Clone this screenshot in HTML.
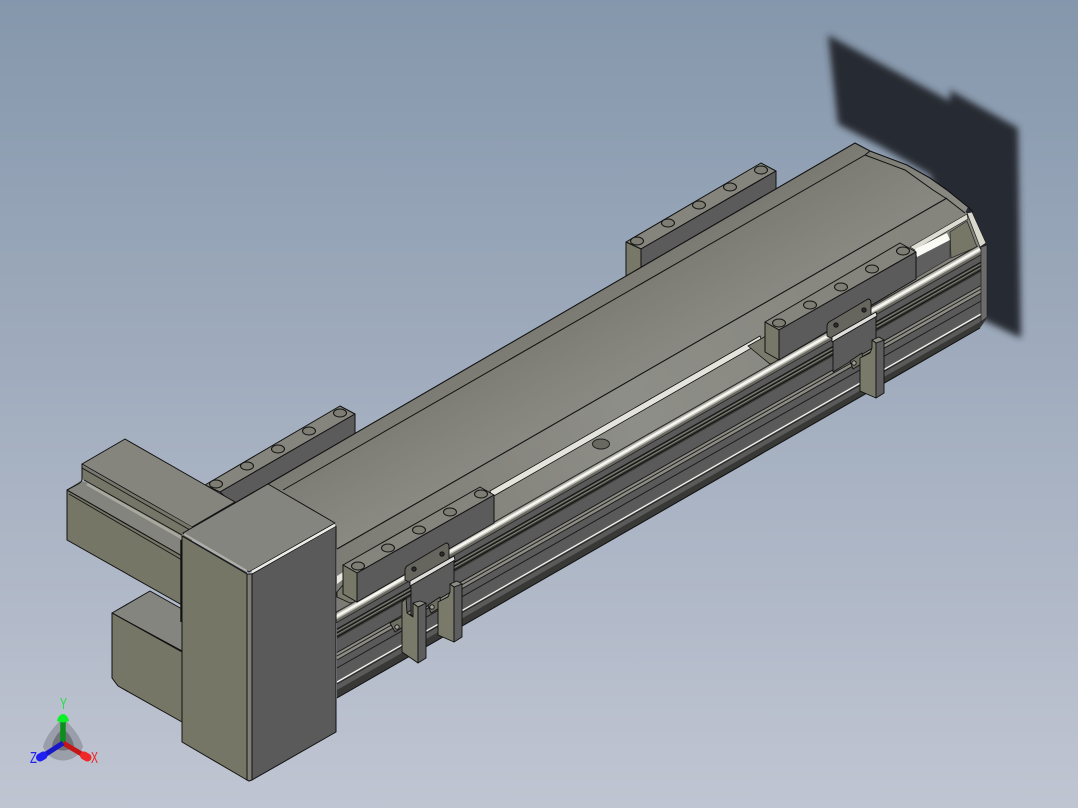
<!DOCTYPE html>
<html><head><meta charset="utf-8"><style>
html,body{margin:0;padding:0;width:1078px;height:808px;overflow:hidden;background:#a4adbd}
svg{display:block}
text{font-family:"Liberation Sans",sans-serif}
</style></head><body>
<svg width="1078" height="808" viewBox="0 0 1078 808" xmlns="http://www.w3.org/2000/svg">
<defs>
<linearGradient id="bg" x1="0" y1="0" x2="0" y2="1"><stop offset="0" stop-color="#8597ac"/><stop offset="1" stop-color="#c0c5d2"/></linearGradient>
<linearGradient id="top" gradientUnits="userSpaceOnUse" x1="660" y1="200" x2="760" y2="380"><stop offset="0" stop-color="#72726a"/><stop offset=".55" stop-color="#85857e"/><stop offset="1" stop-color="#92928c"/></linearGradient>
<linearGradient id="shelf" gradientUnits="userSpaceOnUse" x1="300" y1="500" x2="900" y2="200"><stop offset="0" stop-color="#7c7c74"/><stop offset=".5" stop-color="#8e8e88"/><stop offset="1" stop-color="#85857d"/></linearGradient>
<filter id="bl" x="-10%" y="-10%" width="120%" height="120%"><feGaussianBlur stdDeviation="3.5"/></filter>
<g id="hole"><ellipse rx="6.5" ry="4" fill="#7d7d73" stroke="#111" stroke-width="1"/></g>
</defs>
<rect width="1078" height="808" fill="url(#bg)"/>

<!-- shadow -->
<polygon points="828,35 950,101 950,90 1018,128 1021,338 975,316 930,175 880,146 838,124" fill="#272b31" filter="url(#bl)"/>

<!-- back mounting blocks -->
<g stroke="#111" stroke-width="1" stroke-linejoin="round">
<polygon points="205,485 340,406 355,414 220,492" fill="#85857d"/>
<polygon points="220,492 355,414 355,434 233,504" fill="#5b5b5b"/>
<polygon points="626,242 761,163 776,171 641,249" fill="#85857d"/>
<polygon points="641,249 776,171 776,192 641,270" fill="#5b5b5b"/>
<polygon points="626,242 641,249 641,270 626,279" fill="#787869"/>
</g>
<use href="#hole" x="216" y="484"/><use href="#hole" x="247" y="466"/><use href="#hole" x="278" y="449"/><use href="#hole" x="309" y="431"/><use href="#hole" x="340" y="413"/>
<use href="#hole" x="637" y="241"/><use href="#hole" x="668" y="223"/><use href="#hole" x="699" y="205"/><use href="#hole" x="730" y="187"/><use href="#hole" x="761" y="170"/>

<!-- rail body side -->
<polygon points="337,620 980,254 987,245 987,318 980,328 337,698" fill="#5a5a5a"/>
<!-- grooves -->
<polygon points="337,629 981,262 981,272 337,639" fill="#3c3c38"/>
<g fill="none" stroke-width="1"><path d="M337,631 981,264M337,634.5 981,267.5" stroke="#83837b"/><path d="M337,629 981,262M337,633 981,266M337,637 981,270" stroke="#111"/></g>
<polygon points="337,653 981,286 981,293 337,660" fill="#8c8c84"/>
<g fill="none" stroke="#1c1c1c" stroke-width="1"><path d="M337,652.5 981,285.5M337,656 981,289M337,660 981,293M337,668 981,301"/></g>
<path d="M337,682 981,314" stroke="#f2f2ee" stroke-width="1.3"/>
<path d="M337,684 981,316" stroke="#222" stroke-width="1"/>
<polygon points="337,690 980,322 987,318 980,328 337,698" fill="#383836"/>
<path d="M980,328 337,698" stroke="#111"/>

<!-- shelf and top -->
<polygon points="337,549 947,198 967,213 980,247 337,612" fill="url(#shelf)"/>
<polygon points="268,484 855,143 870,151 907,165 930,178 947,190 968,207 965,213 947,198 337,549 283,515" fill="url(#top)"/>
<path d="M268,484 855,143 870,151 907,165 930,178 947,190 968,207 973,212" fill="none" stroke="#111" stroke-width="1.1"/>
<path d="M283,490 865,155 870,151 M865,155 905,170 933,190 947,199 965,213" stroke="#111" stroke-width="1" fill="none"/>
<path d="M337,549 947,198" stroke="#111" stroke-width="1.1" fill="none"/>
<ellipse cx="601" cy="444" rx="8.5" ry="5" fill="#696961" stroke="#222"/>

<!-- white strip under the shelf -->
<polygon points="490,491 760,336 762,342 492,497" fill="#e4e4dc" stroke="#111" stroke-width=".8"/>
<polygon points="337,576 345,571 345,578 337,584" fill="#e8e8e0"/>
<polygon points="910,247 967,214 968,219 915,250" fill="#dcdcd2" stroke="#222" stroke-width=".7"/>
<polygon points="916,256 950,240 950,258 916,278" fill="#5f5f5f" stroke="#222" stroke-width=".6"/>
<polygon points="915,249 947,233 950,240 917,257" fill="#fbfbf6"/>
<polygon points="950,232 967,221 977,247 951,258" fill="#777768" stroke="#222" stroke-width=".7"/>

<!-- feet of carriage -->
<polygon points="748,346 766,336 779,361 770,364" fill="#7b7b6d" stroke="#111" stroke-width=".8"/>
<polygon points="337,592 343,585 357,602 350,603 337,597" fill="#7b7b6d" stroke="#111" stroke-width=".8"/>

<!-- rod -->
<g fill="none" stroke-linecap="butt">
<path d="M330,621 980,250" stroke="#1e1e1e" stroke-width="10"/>
<path d="M330,621 980,250" stroke="#6a6a63" stroke-width="8.5"/>
<path d="M330,620 980,249" stroke="#b8b8b0" stroke-width="5.5"/>
<path d="M330,620 980,249" stroke="#f6f6f0" stroke-width="2.6"/>
</g>
<polygon points="967,213 972,212 986,243 980,247" fill="#d8d8ce" stroke="#222" stroke-width=".7"/>
<polygon points="981,247 987,245 987,317 981,322" fill="#6c6c6c" stroke="#222" stroke-width=".7"/>

<!-- carriage blocks -->
<g stroke="#111" stroke-width="1" stroke-linejoin="round">
<polygon points="343,565 480,487 494,495 357,573" fill="#85857d"/>
<polygon points="357,573 494,495 494,523 357,602" fill="#5b5b5b"/>
<polygon points="343,565 357,573 357,602 343,594" fill="#787869"/>
<polygon points="765,322 900,243 916,252 779,330" fill="#85857d"/>
<polygon points="779,330 916,252 916,279 779,360" fill="#5b5b5b"/>
<polygon points="765,322 779,330 779,360 765,352" fill="#787869"/>
</g>
<use href="#hole" x="358" y="566"/><use href="#hole" x="388" y="548"/><use href="#hole" x="419" y="530"/><use href="#hole" x="450" y="512"/><use href="#hole" x="481" y="494"/>
<use href="#hole" x="779" y="323"/><use href="#hole" x="810" y="305"/><use href="#hole" x="841" y="287"/><use href="#hole" x="872" y="269"/><use href="#hole" x="903" y="251"/>

<!-- near left tab -->
<g stroke="#111" stroke-width=".9" stroke-linejoin="round">
<polygon points="390,623 402,617 406,617 406,625 395,632" fill="#6f6f62"/>
<circle cx="397" cy="627" r="2.2" fill="#a2a298"/>
</g>
<!-- bracket -->
<g id="bk" stroke="#111" stroke-width=".9" stroke-linejoin="round">
<polygon points="411,585 454,560 454,590 411,616" fill="#5b5b5b"/>
<path d="M405,570 Q405,568 407,566 L446,543 Q449,543 449,547 L449,560 L411,583 L405,580Z" fill="#66665e"/>
<polygon points="410,581 454,556 455,560 410,586" fill="#dededa"/>
<circle cx="414" cy="569" r="2.2" fill="#2c2c2c"/><circle cx="442" cy="554" r="2.2" fill="#2c2c2c"/>
<polygon points="428,605 440,597 441,607 431,613" fill="#6f6f62"/>
<circle cx="432" cy="607" r="2.2" fill="#a2a298"/>
<polygon points="450,584 454,587 454,642 438,635 438,602 448,597 450,592" fill="#7a7a6b"/>
<polygon points="454,587 462,584 462,637 454,642" fill="#5e5e5e"/>
<polygon points="450,584 457,581 462,584 454,587" fill="#8c8c84"/>
</g>
<use href="#bk" x="422" y="-244"/>
<!-- near left leg -->
<g stroke="#111" stroke-width=".9" stroke-linejoin="round">
<polygon points="402,602 406,598 407,613 413,617 413,603 418,607 418,663 402,652" fill="#7a7a6b"/>
<polygon points="418,607 426,603 426,658 418,663" fill="#5e5e5e"/>
<polygon points="413,603 420,601 426,603 418,607" fill="#8c8c84"/>
</g>

<!-- motor blocks -->
<g stroke="#111" stroke-width="1" stroke-linejoin="round">
<polygon points="150,591 182,609 182,651 112,613" fill="#85857f"/>
<path d="M112,613 182,652 182,722 118,686 112,678Z" fill="#767667"/>
<polygon points="125,439 235,502 192,527 82,464" fill="#85857e"/>
<path d="M82,465 192,527 192,545 82,479Z" fill="#757568" stroke="none"/>
<path d="M86,482 182,537 182,558 67,490 80,481Z" fill="#84847e" stroke="none"/>
<polygon points="67,490 182,556 182,605 67,540" fill="#767667"/>
<path d="M82,464 82,479 Q82,482 78,484 L67,490" fill="none"/>
</g>
<path d="M87,484 182,538" stroke="#a8a89e" stroke-width="3" fill="none"/>
<path d="M82,468 190,530 M84,480 182,535 M67,490 182,556 M69,494 182,560" stroke="#151515" stroke-width=".9" fill="none"/>

<!-- end cap -->
<g stroke="#111" stroke-width="1" stroke-linejoin="round">
<polygon points="268,484 335,523 249,572 183,533" fill="#858580"/>
<polygon points="182,536 247,574 247,780 182,742" fill="#767667"/>
<polygon points="252,574 336,526 336,732 252,780" fill="#5a5a5a"/>
<polygon points="247,574 252,574 252,780 249,781 247,780" fill="#7f7f74"/>
</g>
<path d="M252,572 335,525" stroke="#ecece6" stroke-width="2.6" fill="none"/>
<path d="M184,534 247,571" stroke="#aeaea6" stroke-width="2" fill="none"/>
<path d="M183,536 247,573" stroke="#222" stroke-width=".8" fill="none"/>
<path d="M181,540V622" stroke="#111" stroke-width="1.4" fill="none"/>

<!-- triad -->
<path d="M63,718 C53,727 45,738 43,747 C50,765 76,765 83,747 C81,738 73,727 63,718Z" fill="#5d5f63" fill-opacity=".35"/>
<path d="M63,729 C57,733 53,740 52,746 C58,752 68,752 74,746 C73,740 69,733 63,729Z" fill="#333" fill-opacity=".4"/>
<path d="M63,744V720" stroke="#0a8f1c" stroke-width="5.5"/>
<path d="M57,721 C58,716 61,714 63,714 C65,714 68,716 69,721 Q63,724 57,721Z" fill="#0cf02a"/>
<path d="M63,743 85,756" stroke="#c41616" stroke-width="5"/>
<path d="M84,755.5 87.5,757.5" stroke="#f02828" stroke-width="8" stroke-linecap="round"/>
<path d="M63,743 43,756" stroke="#1818c8" stroke-width="5"/>
<path d="M43.5,755.5 40,757.5" stroke="#2020f4" stroke-width="8" stroke-linecap="round"/>
<text x="60" y="709" font-size="16" fill="#22e044" textLength="7" lengthAdjust="spacingAndGlyphs">Y</text>
<text x="91" y="763" font-size="16" fill="#ee2222" textLength="7" lengthAdjust="spacingAndGlyphs">X</text>
<text x="30" y="763" font-size="16" fill="#2222ee" textLength="7" lengthAdjust="spacingAndGlyphs">Z</text>
</svg>
</body></html>
